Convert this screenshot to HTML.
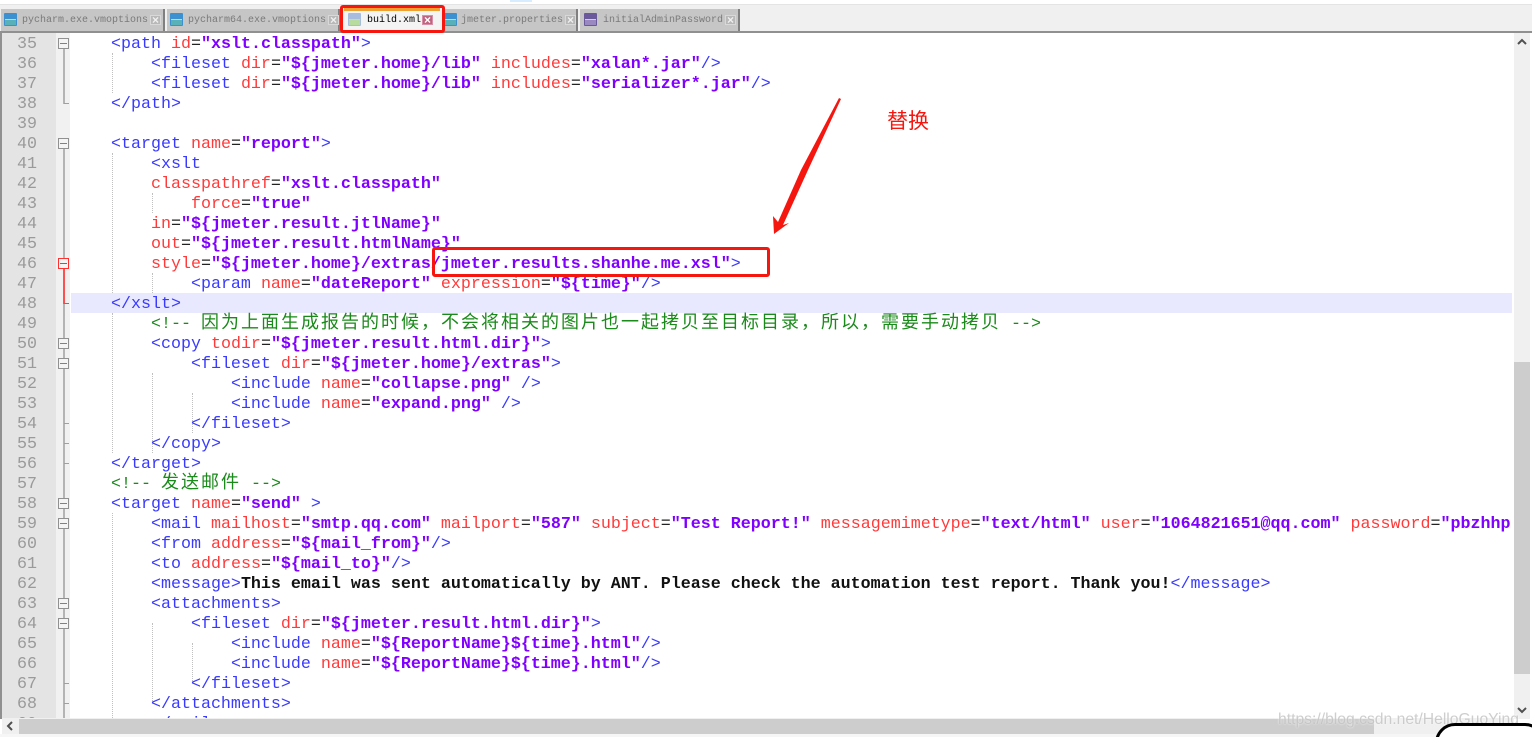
<!DOCTYPE html>
<html><head><meta charset="utf-8"><style>
html,body{margin:0;padding:0;width:1532px;height:737px;overflow:hidden;background:#fff}
div,pre{position:absolute;margin:0;box-sizing:border-box}
pre,.tx{font-family:"Liberation Mono","Noto Sans CJK SC",monospace}
pre{font-size:16.67px;line-height:20px;white-space:pre;filter:blur(.35px)}
.t{color:#3a3aff}.a{color:#ff3a3a}.v{color:#8000ff;font-weight:bold}.e{color:#222}.c{color:#1a8a1a}.b{color:#111;font-weight:bold}
.z{font-family:"Noto Sans CJK SC",sans-serif;font-size:18px;letter-spacing:2px;color:#1a8a1a;line-height:0}
.tab{top:9px;height:22px;background:#c6c6c6;border-right:2px solid #808080}
.tx{top:14px;font-size:10px;line-height:13px;color:#7a7a7a;white-space:pre;filter:blur(.3px)}
.ic{top:13px;width:13px;height:13px;background:#3c90d0;border-radius:1px}
.ic i{position:absolute;left:1px;right:1px;bottom:1px;height:5px;background:#58b0b8;border-top:1px solid #b8d8f0;display:block}
.x{top:15px;width:11px;height:10px;background:#b8b8b8;border:1px solid #d8d8d8;color:#f0f0f0;font:bold 12px/8px "Liberation Sans",sans-serif;text-align:center;overflow:hidden}
.g{width:1px;border-left:1px dotted #c0c0c0}
.fb{left:58px;width:11px;height:11px;border:1px solid #909090;background:#f4f4f4}
.fb i{position:absolute;left:1px;right:1px;top:4px;height:1px;background:#808080;display:block}
.tk{left:64px;width:5px;height:1px;background:#a0a0a0}
</style></head><body>
<div style="left:0;top:0;width:1532px;height:737px;overflow:hidden;background:#fff">
<div style="left:510px;top:0;width:22px;height:2px;background:#d8ecff"></div>
<div style="left:0;top:4px;width:1532px;height:28px;background:#f0f0f0;border-top:1px solid #e4e4e4"></div>

<div class="tab" style="left:1px;width:164px"></div>
<div class="ic" style="left:4px"><i></i></div><div class="tx" style="left:22px">pycharm.exe.vmoptions</div><div class="x" style="left:150px">×</div>
<div class="tab" style="left:167px;width:173px"></div>
<div class="ic" style="left:170px"><i></i></div><div class="tx" style="left:188px">pycharm64.exe.vmoptions</div><div class="x" style="left:328px">×</div>
<div style="left:344px;top:8px;width:96px;height:24px;background:#f4f4f4;border-top:3px solid #f0a030"></div>
<div class="ic" style="left:348px;background:#a8bce0"><i style="background:#b8dca0"></i></div><div class="tx" style="left:367px;color:#000">build.xml</div><div class="x" style="left:422px;background:#c06480;border-color:#d890a8;color:#fff">×</div>
<div class="tab" style="left:443px;width:135px"></div>
<div class="ic" style="left:444px"><i></i></div><div class="tx" style="left:461px">jmeter.properties</div><div class="x" style="left:565px">×</div>
<div class="tab" style="left:580px;width:160px"></div>
<div class="ic" style="left:584px;background:#6a5a9c"><i style="background:#9a88c0"></i></div><div class="tx" style="left:603px">initialAdminPassword</div><div class="x" style="left:725px">×</div>

<div style="left:0;top:31px;width:1532px;height:2px;background:#909090"></div>
<div style="left:0;top:33px;width:2px;height:686px;background:#909090"></div>

<div style="left:2px;top:33px;width:54px;height:686px;background:#e4e4e4"></div>
<div style="left:56px;top:33px;width:14px;height:686px;background:#f1f1f1"></div>

<div style="left:71px;top:293px;width:1441px;height:20px;background:#e8e8ff"></div>

<div style="left:0;top:33px;width:1512px;height:685px;overflow:hidden">
<div class="g" style="left:112px;top:20px;height:40px"></div>
<div class="g" style="left:112px;top:120px;height:140px"></div>
<div class="g" style="left:112px;top:280px;height:140px"></div>
<div class="g" style="left:112px;top:480px;height:205px"></div>
<div class="g" style="left:152px;top:160px;height:20px"></div>
<div class="g" style="left:152px;top:240px;height:20px"></div>
<div class="g" style="left:152px;top:340px;height:80px"></div>
<div class="g" style="left:152px;top:590px;height:80px"></div>
<div class="g" style="left:192px;top:360px;height:40px"></div>
<div class="g" style="left:192px;top:610px;height:40px"></div>

<div style="left:63px;top:10px;width:2px;height:61px;background:#b4b4b4"></div>
<div style="left:63px;top:110px;width:2px;height:575px;background:#b4b4b4"></div>
<div style="left:63px;top:230px;width:2px;height:41px;background:#ff5050"></div>
<div class="tk" style="top:70px"></div><div class="tk" style="top:270px;background:#ff4040"></div>
<div class="tk" style="top:390px"></div><div class="tk" style="top:410px"></div><div class="tk" style="top:430px"></div>
<div class="tk" style="top:650px"></div><div class="tk" style="top:670px"></div>
<div class="fb" style="top:5px"><i></i></div>
<div class="fb" style="top:105px"><i></i></div>
<div class="fb" style="top:225px;border-color:#ff3030"><i style="background:#ff3030"></i></div>
<div class="fb" style="top:305px"><i></i></div>
<div class="fb" style="top:325px"><i></i></div>
<div class="fb" style="top:465px"><i></i></div>
<div class="fb" style="top:485px"><i></i></div>
<div class="fb" style="top:565px"><i></i></div>
<div class="fb" style="top:585px"><i></i></div>

<pre style="left:17px;color:#9a9a9a;top:2px">35
36
37
38
39
40
41
42
43
44
45
46
47
48
49
50
51
52
53
54
55
56
57
58
59
60
61
62
63
64
65
66
67
68
69</pre>
<pre style="left:71px;top:2px">    <span class="t">&lt;path</span> <span class="a">id</span><span class="e">=</span><span class="v">"xslt.classpath"</span><span class="t">&gt;</span>
        <span class="t">&lt;fileset</span> <span class="a">dir</span><span class="e">=</span><span class="v">"${jmeter.home}/lib"</span> <span class="a">includes</span><span class="e">=</span><span class="v">"xalan*.jar"</span><span class="t">/&gt;</span>
        <span class="t">&lt;fileset</span> <span class="a">dir</span><span class="e">=</span><span class="v">"${jmeter.home}/lib"</span> <span class="a">includes</span><span class="e">=</span><span class="v">"serializer*.jar"</span><span class="t">/&gt;</span>
    <span class="t">&lt;/path&gt;</span>

    <span class="t">&lt;target</span> <span class="a">name</span><span class="e">=</span><span class="v">"report"</span><span class="t">&gt;</span>
        <span class="t">&lt;xslt</span>
        <span class="a">classpathref</span><span class="e">=</span><span class="v">"xslt.classpath"</span>
            <span class="a">force</span><span class="e">=</span><span class="v">"true"</span>
        <span class="a">in</span><span class="e">=</span><span class="v">"${jmeter.result.jtlName}"</span>
        <span class="a">out</span><span class="e">=</span><span class="v">"${jmeter.result.htmlName}"</span>
        <span class="a">style</span><span class="e">=</span><span class="v">"${jmeter.home}/extras/jmeter.results.shanhe.me.xsl"</span><span class="t">&gt;</span>
            <span class="t">&lt;param</span> <span class="a">name</span><span class="e">=</span><span class="v">"dateReport"</span> <span class="a">expression</span><span class="e">=</span><span class="v">"${time}"</span><span class="t">/&gt;</span>
    <span class="t">&lt;/xslt&gt;</span>
        <span class="c">&lt;!-- <span class="z">因为上面生成报告的时候，不会将相关的图片也一起拷贝至目标目录，所以，需要手动拷贝</span> --&gt;</span>
        <span class="t">&lt;copy</span> <span class="a">todir</span><span class="e">=</span><span class="v">"${jmeter.result.html.dir}"</span><span class="t">&gt;</span>
            <span class="t">&lt;fileset</span> <span class="a">dir</span><span class="e">=</span><span class="v">"${jmeter.home}/extras"</span><span class="t">&gt;</span>
                <span class="t">&lt;include</span> <span class="a">name</span><span class="e">=</span><span class="v">"collapse.png"</span> <span class="t">/&gt;</span>
                <span class="t">&lt;include</span> <span class="a">name</span><span class="e">=</span><span class="v">"expand.png"</span> <span class="t">/&gt;</span>
            <span class="t">&lt;/fileset&gt;</span>
        <span class="t">&lt;/copy&gt;</span>
    <span class="t">&lt;/target&gt;</span>
    <span class="c">&lt;!-- <span class="z">发送邮件</span> --&gt;</span>
    <span class="t">&lt;target</span> <span class="a">name</span><span class="e">=</span><span class="v">"send"</span> <span class="t">&gt;</span>
        <span class="t">&lt;mail</span> <span class="a">mailhost</span><span class="e">=</span><span class="v">"smtp.qq.com"</span> <span class="a">mailport</span><span class="e">=</span><span class="v">"587"</span> <span class="a">subject</span><span class="e">=</span><span class="v">"Test Report!"</span> <span class="a">messagemimetype</span><span class="e">=</span><span class="v">"text/html"</span> <span class="a">user</span><span class="e">=</span><span class="v">"1064821651@qq.com"</span> <span class="a">password</span><span class="e">=</span><span class="v">"pbzhhp</span>
        <span class="t">&lt;from</span> <span class="a">address</span><span class="e">=</span><span class="v">"${mail_from}"</span><span class="t">/&gt;</span>
        <span class="t">&lt;to</span> <span class="a">address</span><span class="e">=</span><span class="v">"${mail_to}"</span><span class="t">/&gt;</span>
        <span class="t">&lt;message&gt;</span><span class="b">This email was sent automatically by ANT. Please check the automation test report. Thank you!</span><span class="t">&lt;/message&gt;</span>
        <span class="t">&lt;attachments&gt;</span>
            <span class="t">&lt;fileset</span> <span class="a">dir</span><span class="e">=</span><span class="v">"${jmeter.result.html.dir}"</span><span class="t">&gt;</span>
                <span class="t">&lt;include</span> <span class="a">name</span><span class="e">=</span><span class="v">"${ReportName}${time}.html"</span><span class="t">/&gt;</span>
                <span class="t">&lt;include</span> <span class="a">name</span><span class="e">=</span><span class="v">"${ReportName}${time}.html"</span><span class="t">/&gt;</span>
            <span class="t">&lt;/fileset&gt;</span>
        <span class="t">&lt;/attachments&gt;</span>
        <span class="t">&lt;/mail&gt;</span></pre>
</div>

<div style="left:1514px;top:33px;width:16px;height:686px;background:#f0f0f0"></div>
<div style="left:1514px;top:362px;width:16px;height:312px;background:#cdcdcd"></div>
<svg style="position:absolute;left:1514px;top:36px" width="16" height="12"><path d="M4 8L8 4L12 8" fill="none" stroke="#505050" stroke-width="2"/></svg>
<svg style="position:absolute;left:1514px;top:704px" width="16" height="12"><path d="M4 4L8 8L12 4" fill="none" stroke="#505050" stroke-width="2"/></svg>

<div style="left:2px;top:718px;width:1512px;height:16px;background:#f0f0f0"></div>
<div style="left:19px;top:719px;width:1355px;height:15px;background:#cdcdcd"></div>
<svg style="position:absolute;left:4px;top:720px" width="12" height="12"><path d="M8 2L4 6L8 10" fill="none" stroke="#505050" stroke-width="2"/></svg>
<div style="left:0;top:734px;width:1532px;height:3px;background:#f6f6f6"></div>

<div style="left:340px;top:5px;width:105px;height:28px;border:3px solid #f5170f;border-radius:3px"></div>
<div style="left:432px;top:247px;width:338px;height:30px;border:3px solid #f5170f;border-radius:3px"></div>
<svg style="position:absolute;left:0;top:0" width="1532" height="737"><polygon points="841,99 808,170 783,225 789,223 774,234 773,216 778,222 801,170 839,98" fill="#f5170f"/></svg>
<div style="left:887px;top:105px;font:21px/30px 'Noto Sans CJK SC',sans-serif;color:#f5170f;white-space:nowrap">替换</div>

<div style="left:1278px;top:710px;font:15.7px/20px 'Liberation Sans',sans-serif;color:rgba(190,190,190,.75);text-shadow:0 0 2px rgba(255,255,255,.9);white-space:nowrap">https://blog.csdn.net/HelloGuoYing</div>
<div style="left:1435px;top:723px;width:110px;height:40px;background:#fff;border:3px solid #000;border-radius:20px"></div>
</div>
</body></html>
